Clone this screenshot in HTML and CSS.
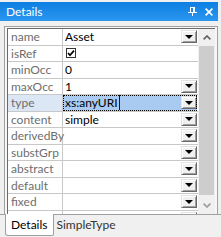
FILE: index.html
```html
<!DOCTYPE html>
<html>
<head>
<meta charset="utf-8">
<link rel="stylesheet" href="styles.css">
</head>
<body>
<div class="win">
  <div class="title">
    <span class="title-text">Details</span>
    <span class="title-icons">
      <svg class="pin" width="9" height="9" viewBox="0 0 9 9">
        <rect x="2" y="0" width="1" height="5" fill="#fff"/>
        <rect x="5" y="0" width="2" height="5" fill="#fff"/>
        <rect x="2" y="0" width="5" height="1" fill="#fff"/>
        <rect x="0" y="5" width="9" height="1" fill="#fff"/>
        <rect x="4" y="6" width="1" height="3" fill="#fff"/>
      </svg>
      <svg class="close" width="8" height="8" viewBox="0 0 8 8">
        <path d="M0.6 0.6 L7.4 7.4 M7.4 0.6 L0.6 7.4" stroke="#fff" stroke-width="1.6" fill="none"/>
      </svg>
    </span>
  </div>
  <div class="frame">
    <div class="sunken">
      <div class="grid">
        <div class="row"><div class="label">name</div><div class="value"><span class="val">Asset</span><span class="btn"><i></i></span></div></div>
        <div class="row"><div class="label">isRef</div><div class="value"><span class="val"><svg class="chk" width="10" height="10" viewBox="0 0 10 10"><rect x="0.5" y="0.5" width="9" height="9" fill="#fff" stroke="#333"/><path d="M2 5 L4 7.2 L8 2.6" stroke="#000" stroke-width="1.7" fill="none"/></svg></span></div></div>
        <div class="row"><div class="label">minOcc</div><div class="value"><span class="val">0</span></div></div>
        <div class="row"><div class="label">maxOcc</div><div class="value"><span class="val">1</span><span class="btn"><i></i></span></div></div>
        <div class="row sel"><div class="label">type</div><div class="value"><span class="val"><span class="caret">xs:anyURI</span></span><span class="btn"><i></i></span></div></div>
        <div class="row"><div class="label">content</div><div class="value"><span class="val">simple</span><span class="btn"><i></i></span></div></div>
        <div class="row"><div class="label">derivedBy</div><div class="value"><span class="val"></span><span class="btn"><i></i></span></div></div>
        <div class="row"><div class="label">substGrp</div><div class="value"><span class="val"></span><span class="btn"><i></i></span></div></div>
        <div class="row"><div class="label">abstract</div><div class="value"><span class="val"></span><span class="btn"><i></i></span></div></div>
        <div class="row"><div class="label">default</div><div class="value"><span class="val"></span><span class="btn"><i></i></span></div></div>
        <div class="row"><div class="label">fixed</div><div class="value"><span class="val"></span><span class="btn"><i></i></span></div></div>
        <div class="row"><div class="label">nillable</div><div class="value"><span class="val"></span><span class="btn"><i></i></span></div></div>
      </div>
      <div class="sb">
        <div class="sb-btn"><svg width="8" height="5" viewBox="0 0 8 5"><path d="M0.6 4.4 L4 1 L7.4 4.4" stroke="#606060" stroke-width="1.6" fill="none"/></svg></div>
        <div class="sb-thumb"></div>
        <div class="sb-btn"><svg width="8" height="5" viewBox="0 0 8 5"><path d="M0.6 0.6 L4 4 L7.4 0.6" stroke="#9a9a9a" stroke-width="1.6" fill="none"/></svg></div>
      </div>
    </div>
  </div>
  <div class="tabs">
    <div class="tab active">Details</div>
    <div class="tab">SimpleType</div>
  </div>
</div>
</body>
</html>
```
FILE: styles.css
```css
* { box-sizing: border-box; }
html, body { margin: 0; padding: 0; }
body {
  width: 221px;
  height: 237px;
  overflow: hidden;
  background: #f0f0f0;
  font-family: Lato, "Liberation Sans", sans-serif;
  font-size: 12px;
}
.win { display: flex; flex-direction: column; height: 237px; }
.title {
  margin: 2px 3px 0 0;
  height: 19px;
  flex: none;
  background: linear-gradient(#0d7fe2, #2a97ef);
  color: #fff;
  display: flex;
  align-items: center;
  justify-content: space-between;
  padding: 0 5px 0 6px;
}
.title-icons { display: flex; align-items: center; gap: 8px; }
.title-icons svg { display: block; }
.frame {
  flex: none;
  margin: 5px 0 0 4px;
  width: 214px;
  height: 189px;
  border: 1px solid #a0a0a0;
  padding: 1px 2px 0 2px;
  background: #f7f7f7;
}
.sunken {
  height: 100%;
  border-top: 1px solid #696969;
  border-left: 1px solid #696969;
  display: flex;
  overflow: hidden;
  background: #fff;
}
.grid { flex: 1; overflow: hidden; }
.row { display: flex; height: 16.5px; flex: none; border-bottom: 1px solid #c8c8c8; }
.label {
  width: 55px;
  flex: none;
  border-right: 1px solid #c8c8c8;
  padding-left: 3px;
  color: #6e6e6e;
  line-height: 15px;
  white-space: nowrap;
}
.value {
  flex: 1;
  display: flex;
  align-items: center;
  padding-left: 2px;
  margin-right: 1px;
  color: #000;
  line-height: 15px;
}
.val { flex: 1; display: flex; align-items: center; }
.chk { display: block; margin-left: 1px; }
.btn {
  width: 16px;
  height: 13px;
  flex: none;
  background: #f0f0f0;
  border: 1px solid;
  border-color: #e3e3e3 #696969 #696969 #e3e3e3;
  box-shadow: inset 1px 1px #fff, inset -1px -1px #a0a0a0;
  display: flex;
  align-items: center;
  justify-content: center;
}
.btn i {
  display: block;
  width: 0;
  height: 0;
  border-left: 4px solid transparent;
  border-right: 4px solid transparent;
  border-top: 4px solid #000;
}
.sel .label { background: #dce7f5; }
.sel .value { background: #a9cbf1; outline: 1px dotted #000; outline-offset: -1px; }
.caret { border-right: 1px solid #0a1a40; padding-right: 1px; }
.sb { width: 17px; flex: none; background: #f0f0f0; display: flex; flex-direction: column; }
.sb-btn { height: 17px; flex: none; display: flex; align-items: center; justify-content: center; }
.sb-btn svg { display: block; }
.sb-thumb { flex: 1; background: #cdcdcd; margin: 0 1px 2px 1px; }
.tabs {
  flex: 1;
  margin-top: -1px;
  border-top: 1px solid #a0a0a0;
  display: flex;
  align-items: flex-start;
}
.tab { padding: 0 3px; line-height: 20px; color: #333; }
.tab.active {
  margin: -1px 0 0 5px;
  background: #fff;
  color: #000;
  border: 1px solid #a0a0a0;
  border-top: none;
  height: 22px;
  padding: 1px 5px 0 5px;
  border-radius: 0 0 2px 3px;
}
```
